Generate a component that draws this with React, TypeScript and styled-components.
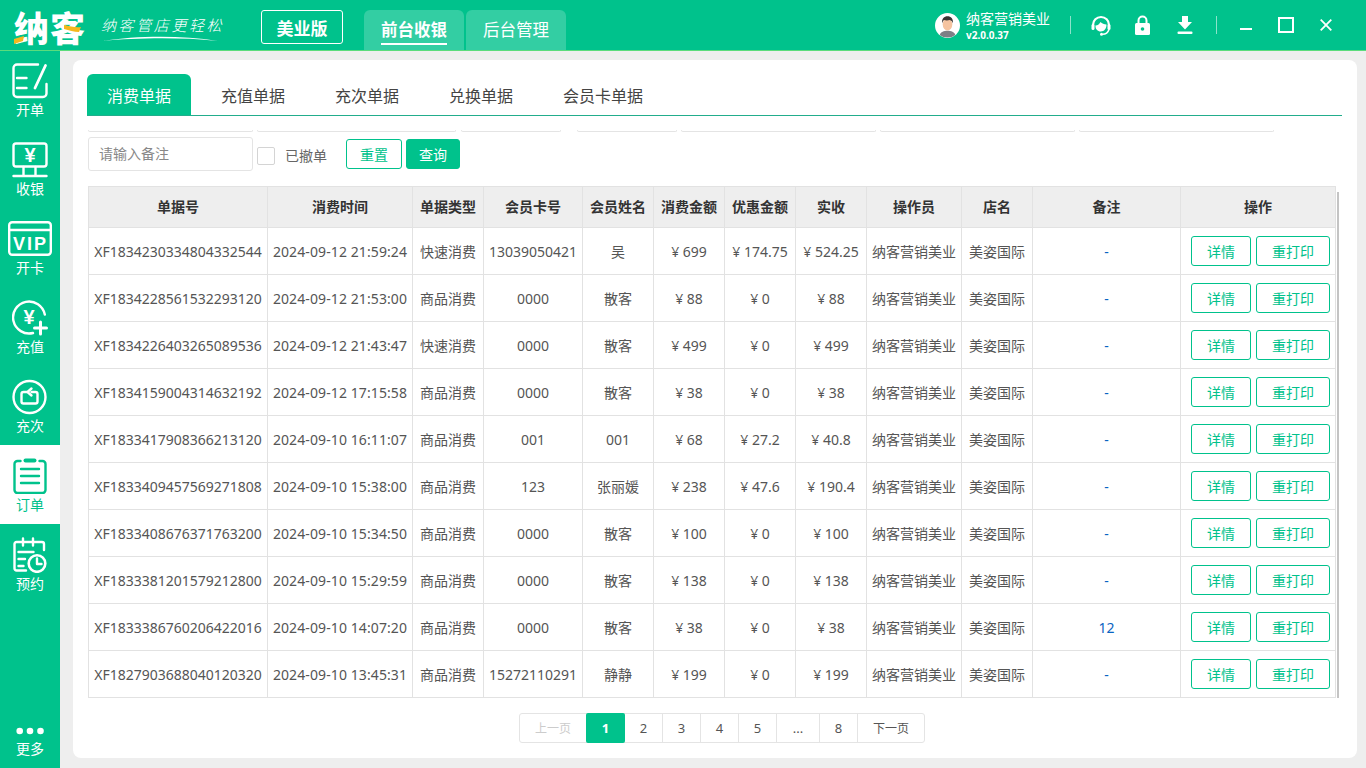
import React from "react"
import styled, { createGlobalStyle } from "styled-components"

const GREEN = "#00c28c"

const Global = createGlobalStyle`
  html, body { margin: 0; padding: 0; height: 100%; }
  body { font-family: "Noto Sans", "Noto Sans CJK SC", sans-serif; background: #eeeeee; overflow: hidden; }
  * { box-sizing: border-box; }
`

const Page = styled.div`
  width: 1366px;
  height: 768px;
  display: flex;
  flex-direction: column;
  background: #eeeeee;
`

// Header
const Header = styled.header`
  height: 50px;
  flex: none;
  background: ${GREEN};
  box-shadow: 0 1px 0 #5cdc7c;
  position: relative;
  z-index: 2;
  display: flex;
  align-items: flex-start;
  color: #fff;
`

const Logo = styled.div`
  width: 261px;
  height: 50px;
  flex: none;
  padding: 8px 0 0 14px;
  display: flex;
`

const LogoMark = styled.div`
  position: relative;
  width: 76px;
  font-size: 35px;
  line-height: 38px;
  font-weight: 900;
  letter-spacing: 1px;
  font-family: "Noto Sans CJK SC", sans-serif;
  white-space: nowrap;
`

const LogoAccent = styled.svg`
  position: absolute;
  left: 0;
  top: 0;
`

const Slogan = styled.div`
  position: relative;
  margin-left: 11px;
  padding-top: 8px;
  font-size: 15px;
  line-height: 18px;
  letter-spacing: 2.6px;
  font-family: "Noto Sans CJK SC", sans-serif;
  font-weight: 300;
  font-style: italic;
  white-space: nowrap;
`

const Swoosh = styled.svg`
  position: absolute;
  left: 2px;
  top: 27px;
`

const Edition = styled.div`
  width: 82px;
  height: 34px;
  margin-top: 10px;
  flex: none;
  border: 1px solid #fff;
  border-radius: 3px;
  display: flex;
  align-items: center;
  justify-content: center;
  font-size: 17px;
  font-weight: 700;
`

const NavTabs = styled.nav`
  display: flex;
  gap: 2px;
  margin: 10px 0 0 21px;
`

const NavTab = styled.div<{ $active?: boolean }>`
  width: 100px;
  height: 40px;
  background: rgba(255, 255, 255, 0.2);
  border-radius: 6px 6px 0 0;
  display: flex;
  align-items: flex-start;
  justify-content: center;
  font-size: 16.5px;
  font-weight: ${(p) => (p.$active ? 700 : 400)};
  span {
    display: block;
    height: 35px;
    line-height: 40px;
    border-bottom: ${(p) => (p.$active ? "2px solid #fff" : "none")};
  }
`

const HeaderRight = styled.div`
  margin-left: auto;
  height: 50px;
  display: flex;
  align-items: center;
  padding-right: 34px;
`

const User = styled.div`
  display: flex;
  align-items: center;
  gap: 6px;
`

const UserText = styled.div`
  display: flex;
  flex-direction: column;
  width: 104px;
  padding-top: 1px;
`

const UserName = styled.div`
  font-size: 14px;
  line-height: 18px;
  white-space: nowrap;
`

const Version = styled.div`
  font-size: 10px;
  line-height: 14px;
  font-weight: 700;
`

const Divider = styled.div`
  width: 1px;
  height: 18px;
  background: rgba(255, 255, 255, 0.55);
`

const IconGroup = styled.div<{ $gap: number; $left: number; $right: number }>`
  display: flex;
  align-items: center;
  gap: ${(p) => p.$gap}px;
  margin: 0 ${(p) => p.$right}px 0 ${(p) => p.$left}px;
`

// Body
const Body = styled.div`
  flex: 1;
  display: flex;
  min-height: 0;
`

const Sidebar = styled.aside`
  width: 60px;
  flex: none;
  background: ${GREEN};
  display: flex;
  flex-direction: column;
`

const SideItem = styled.div<{ $active?: boolean }>`
  height: 79px;
  flex: none;
  background: ${(p) => (p.$active ? "#fff" : "transparent")};
  color: ${(p) => (p.$active ? GREEN : "#fff")};
  display: flex;
  flex-direction: column;
  align-items: center;
  justify-content: flex-start;
  font-size: 14px;
  line-height: 16px;
  padding-top: 13px;
  svg {
    display: block;
    height: 36px;
    margin-bottom: 3px;
  }
`

const MoreItem = styled(SideItem)`
  margin-top: auto;
  height: 47px;
  padding-top: 0;
  svg {
    height: 20px;
    margin-bottom: 0;
  }
`

const Main = styled.main`
  flex: 1;
  padding: 10px 9px 10px 13px;
  min-width: 0;
`

const Card = styled.div`
  height: 100%;
  background: #fff;
  border-radius: 8px;
  padding: 14px 15px 0 14px;
`

const Tabs = styled.div`
  height: 42px;
  display: flex;
  border-bottom: 1px solid #22ad8c;
`

const Tab = styled.div<{ $active?: boolean; $w: number }>`
  width: ${(p) => p.$w}px;
  height: 41px;
  display: flex;
  align-items: center;
  justify-content: center;
  font-size: 16px;
  color: ${(p) => (p.$active ? "#fff" : "#444")};
  background: ${(p) => (p.$active ? GREEN : "transparent")};
  border-radius: ${(p) => (p.$active ? "6px 6px 0 0" : "0")};
`

const Stubs = styled.div`
  display: flex;
  height: 2px;
  margin: 14px 0 0 1px;
`

const Stub = styled.div<{ $w: number; $ml: number }>`
  width: ${(p) => p.$w}px;
  margin-left: ${(p) => p.$ml}px;
  height: 2px;
  border: 1px solid #e4e4e4;
  border-top: none;
  border-radius: 0 0 3px 3px;
`

const Filters = styled.div`
  display: flex;
  align-items: flex-start;
  margin: 5px 0 0 1px;
`

const SearchInput = styled.input`
  width: 165px;
  height: 34px;
  border: 1px solid #e4e4e4;
  border-radius: 3px;
  padding: 0 10px 2px;
  font: inherit;
  font-size: 14px;
  outline: none;
  &::placeholder {
    color: #888;
    opacity: 1;
  }
`

const CheckLabel = styled.label`
  display: flex;
  align-items: center;
  height: 18px;
  margin: 10px 19px 0 4px;
  font-size: 14px;
  color: #666;
  gap: 10px;
  line-height: 20px;
`

const CheckBox = styled.span`
  width: 18px;
  height: 18px;
  border: 1px solid #d4d4d4;
  border-radius: 2px;
  background: #fff;
`

const FilterButton = styled.button<{ $primary?: boolean }>`
  height: 30px;
  margin: 2px 4px 0 0;
  padding: 0;
  width: ${(p) => (p.$primary ? 54 : 56)}px;
  border: 1px solid ${GREEN};
  border-radius: 3px;
  background: ${(p) => (p.$primary ? GREEN : "#fff")};
  color: ${(p) => (p.$primary ? "#fff" : GREEN)};
  font: inherit;
  font-size: 14px;
`

const TableWrap = styled.div`
  position: relative;
  margin: 15px 0 0 1px;
  width: 1251px;
`

const ScrollLine = styled.div`
  position: absolute;
  left: 1249px;
  top: 6px;
  bottom: 0;
  width: 2px;
  background: #c4c4c4;
`

const Table = styled.table`
  table-layout: fixed;
  border-collapse: collapse;
  width: 1248px;
`

const Th = styled.th`
  height: 41px;
  padding: 0 0 2px;
  background: #eeeeee;
  border: 1px solid #e2e2e2;
  font-size: 14px;
  font-weight: 700;
  color: #333;
  text-align: center;
  white-space: nowrap;
`

const Td = styled.td`
  height: 47px;
  padding: 0;
  border: 1px solid #e2e2e2;
  font-size: 14px;
  color: #555;
  text-align: center;
  white-space: nowrap;
  overflow: hidden;
`

const DateCell = styled(Td)`
  letter-spacing: 0.1px;
`

const NoteLink = styled.span`
  color: #0a64c2;
`

const Actions = styled.div`
  display: flex;
  justify-content: flex-end;
  gap: 5px;
  padding-right: 5px;
`

const RowButton = styled.button<{ $w: number }>`
  width: ${(p) => p.$w}px;
  height: 30px;
  padding: 0;
  border: 1px solid ${GREEN};
  border-radius: 3px;
  background: #fff;
  color: ${GREEN};
  font: inherit;
  font-size: 14px;
`

const Pager = styled.div`
  display: flex;
  width: 406px;
  height: 30px;
  margin: 15px 0 0 432px;
  border: 1px solid #e4e4e4;
  border-radius: 3px;
`

const PageItem = styled.div<{ $w: number; $active?: boolean; $off?: boolean }>`
  width: ${(p) => p.$w}px;
  flex: none;
  display: flex;
  align-items: center;
  justify-content: center;
  margin: ${(p) => (p.$active ? "-1px 0" : "0")};
  font-size: ${(p) => (p.$w > 50 ? 12 : 13)}px;
  font-weight: ${(p) => (p.$active ? 700 : 400)};
  color: ${(p) => (p.$active ? "#fff" : p.$off ? "#ccc" : "#555")};
  background: ${(p) => (p.$active ? GREEN : "transparent")};
  border-radius: ${(p) => (p.$active ? "2px" : "0")};
  border-right: ${(p) => (p.$active || p.$off ? "none" : "1px solid #e4e4e4")};
  &:last-child {
    border-right: none;
  }
`

// Icons
const stroke = { fill: "none", stroke: "currentColor", strokeWidth: 2.4, strokeLinecap: "round", strokeLinejoin: "round" } as const
const iconText = { fill: "currentColor", fontFamily: "'Liberation Sans', sans-serif", fontWeight: 700, textAnchor: "middle" } as const

const IconOpen = () => (
  <svg width="36" viewBox="0 0 36 36">
    <g {...stroke}>
      <path d="M26 1.500H5A3.500 3.500 0 0 0 1.500 5v25.500A3.500 3.500 0 0 0 5 34h26a3.500 3.500 0 0 0 3.500-3.500V21" />
      <path d="M5 15h9.500M5 25h9.500" />
      <path d="M33.500 2.500L23 25" strokeWidth="2.800" />
    </g>
  </svg>
)

const IconCash = () => (
  <svg width="36" viewBox="0 0 36 36">
    <g {...stroke}>
      <rect x="1.500" y="1.500" width="33" height="23" rx="2.500" />
      <path d="M11.500 25v9M23.500 25v9M1.500 34h33" />
    </g>
    <text x="18" y="20" fontSize="20" {...iconText}>¥</text>
  </svg>
)

const IconVip = () => (
  <svg width="44" viewBox="0 0 44 36">
    <g {...stroke}>
      <rect x="1.200" y="1.200" width="41.600" height="32.600" rx="3" />
      <path d="M1.500 9h41" />
    </g>
    <text x="22.500" y="28.500" fontSize="18" letterSpacing="2" {...iconText}>VIP</text>
  </svg>
)

const IconRecharge = () => (
  <svg width="36" viewBox="0 0 36 36">
    <g {...stroke}>
      <path d="M32.800 14.500A16 16 0 1 0 21 33" />
      <path d="M28.500 22v12M22.500 28h12" strokeWidth="3" />
    </g>
    <text x="17" y="24" fontSize="20" {...iconText}>¥</text>
  </svg>
)

const IconTimes = () => (
  <svg width="36" viewBox="0 0 36 36">
    <g {...stroke}>
      <circle cx="17.500" cy="18" r="16" />
      <path d="M15 13h-3.500a2 2 0 0 0-2 2v7.500a2 2 0 0 0 2 2h12a2 2 0 0 0 2-2V15a2 2 0 0 0-2-2h-4" />
      <path d="M19.500 9.500L15.500 13l4 3.500" />
    </g>
  </svg>
)

const IconOrder = () => (
  <svg width="34" viewBox="0 0 34 36">
    <g {...stroke}>
      <path d="M7.500 3H4.500a3 3 0 0 0-3 3v26a3 3 0 0 0 3 3h25a3 3 0 0 0 3-3V6a3 3 0 0 0-3-3h-3" />
      <path d="M12.500 2.500h9" strokeWidth="4" />
      <path d="M8 11h18M8 18h18M8 25h18" />
    </g>
  </svg>
)

const IconBook = () => (
  <svg width="34" viewBox="0 0 34 36">
    <g {...stroke}>
      <path d="M13 33.500H3.500a2 2 0 0 1-2-2V7a2 2 0 0 1 2-2H29a2 2 0 0 1 2 2v6" />
      <path d="M10 1.500v7M20 1.500v7" />
      <path d="M5.500 15h15M5.500 22h6.500M5.500 29h5" />
      <circle cx="24" cy="26.500" r="8.300" strokeWidth="2.600" />
      <path d="M24 21.500v5.500h4.500" />
    </g>
  </svg>
)

const IconMore = () => (
  <svg width="30" viewBox="0 0 30 20">
    <g fill="currentColor">
      <circle cx="4.700" cy="10" r="3.300" />
      <circle cx="15" cy="10" r="3.300" />
      <circle cx="25.500" cy="10" r="3.300" />
    </g>
  </svg>
)

const Avatar = () => (
  <svg width="25" height="25" viewBox="0 0 24 24">
    <circle cx="12" cy="12" r="12" fill="#fff" />
    <path d="M4.500 21c1-3 4-4 7.500-4s6.500 1 7.500 4a12 12 0 0 1-15 0z" fill="#7d7f86" />
    <ellipse cx="12" cy="11" rx="4.600" ry="5.800" fill="#f5c3a0" />
    <path d="M6.800 10c-.5-5 2-7 5.200-7s5.700 2 5.200 7c-.6-2-1.600-3-3-3.300-2 .6-4 .5-5.400 0-1 .6-1.600 1.600-2 3.300z" fill="#3a3433" />
  </svg>
)

const IconHeadset = () => (
  <svg width="20" height="22" viewBox="0 0 20 22">
    <path d="M2 11a8 8 0 0 1 16 0" fill="none" stroke="#fff" strokeWidth="2.200" />
    <rect x="0.500" y="10" width="3" height="6" rx="1.500" fill="#fff" />
    <rect x="16.500" y="10" width="3" height="6" rx="1.500" fill="#fff" />
    <path d="M4.500 11.500c2.500-.2 4-1.600 5-3.500 1.500 1.500 3.500 2.300 6 2.500.2 4.200-2.500 7-5.700 7s-5.500-2.500-5.300-6z" fill="#fff" />
    <path d="M18 15.500c-1 3-3.500 4.700-6.500 4.800" fill="none" stroke="#fff" strokeWidth="1.500" />
    <circle cx="10.500" cy="20.300" r="1.500" fill="#fff" />
  </svg>
)

const IconLock = () => (
  <svg width="18" height="20" viewBox="0 0 18 20">
    <path d="M3.500 9V5.500a4 4 0 0 1 8 0V9" fill="none" stroke="#fff" strokeWidth="2" />
    <rect x="0" y="8" width="15" height="12" rx="1.500" fill="#fff" />
    <circle cx="7.500" cy="14" r="1.800" fill={GREEN} />
  </svg>
)

const IconDownload = () => (
  <svg width="16" height="18" viewBox="0 0 16 18">
    <path d="M5 0h6v6h4l-7 7.500L1 6h4z" fill="#fff" />
    <rect x="0.500" y="15.500" width="15" height="2.500" rx="1" fill="#fff" />
  </svg>
)

const IconMin = () => (
  <svg width="12" height="16" viewBox="0 0 12 16">
    <path d="M0 12h12" stroke="#fff" strokeWidth="2" />
  </svg>
)

const IconMax = () => (
  <svg width="16" height="16" viewBox="0 0 16 16">
    <rect x="1" y="1" width="14" height="14" fill="none" stroke="#fff" strokeWidth="2" />
  </svg>
)

const IconClose = () => (
  <svg width="12" height="12" viewBox="0 0 12 12">
    <path d="M.7.700l10.600 10.600M11.300.700L.7 11.300" stroke="#fff" strokeWidth="1.800" />
  </svg>
)

// Data
const colWidths = [179, 145, 71, 99, 71, 71, 71, 71, 95, 71, 148, 155]
const heads = ["单据号", "消费时间", "单据类型", "会员卡号", "会员姓名", "消费金额", "优惠金额", "实收", "操作员", "店名", "备注", "操作"]

const rows = [
  ["XF1834230334804332544", "2024-09-12 21:59:24", "快速消费", "13039050421", "吴", "¥ 699", "¥ 174.75", "¥ 524.25", "-"],
  ["XF1834228561532293120", "2024-09-12 21:53:00", "商品消费", "0000", "散客", "¥ 88", "¥ 0", "¥ 88", "-"],
  ["XF1834226403265089536", "2024-09-12 21:43:47", "快速消费", "0000", "散客", "¥ 499", "¥ 0", "¥ 499", "-"],
  ["XF1834159004314632192", "2024-09-12 17:15:58", "商品消费", "0000", "散客", "¥ 38", "¥ 0", "¥ 38", "-"],
  ["XF1833417908366213120", "2024-09-10 16:11:07", "商品消费", "001", "001", "¥ 68", "¥ 27.2", "¥ 40.8", "-"],
  ["XF1833409457569271808", "2024-09-10 15:38:00", "商品消费", "123", "张丽媛", "¥ 238", "¥ 47.6", "¥ 190.4", "-"],
  ["XF1833408676371763200", "2024-09-10 15:34:50", "商品消费", "0000", "散客", "¥ 100", "¥ 0", "¥ 100", "-"],
  ["XF1833381201579212800", "2024-09-10 15:29:59", "商品消费", "0000", "散客", "¥ 138", "¥ 0", "¥ 138", "-"],
  ["XF1833386760206422016", "2024-09-10 14:07:20", "商品消费", "0000", "散客", "¥ 38", "¥ 0", "¥ 38", "12"],
  ["XF1827903688040120320", "2024-09-10 13:45:31", "商品消费", "15272110291", "静静", "¥ 199", "¥ 0", "¥ 199", "-"],
]

const sideItems = [
  { label: "开单", icon: <IconOpen /> },
  { label: "收银", icon: <IconCash /> },
  { label: "开卡", icon: <IconVip /> },
  { label: "充值", icon: <IconRecharge /> },
  { label: "充次", icon: <IconTimes /> },
  { label: "订单", icon: <IconOrder />, active: true },
  { label: "预约", icon: <IconBook /> },
]

const stubs = [
  [165, 0],
  [199, 4],
  [100, 5],
  [100, 16],
  [195, 4],
  [195, 4],
  [195, 4],
]

const pages = [
  { t: "上一页", w: 66, off: true },
  { t: "1", w: 39, active: true },
  { t: "2", w: 38 },
  { t: "3", w: 38 },
  { t: "4", w: 38 },
  { t: "5", w: 38 },
  { t: "...", w: 43 },
  { t: "8", w: 38 },
  { t: "下一页", w: 66 },
]

export default function App() {
  return (
    <Page>
      <Global />
      <Header>
        <Logo>
          <LogoMark>
            纳客
            <LogoAccent width="76" height="38" viewBox="0 0 76 38">
              <path d="M0 31l10-3-1 5-9 3z" fill="#f5b81c" />
              <path d="M50 17c6 1 12 3 17 2l-2 5c-5 0-10-2-15-3z" fill="#f5b81c" />
            </LogoAccent>
          </LogoMark>
          <Slogan>
            纳客管店更轻松
            <Swoosh width="117" height="8" viewBox="0 0 117 8">
              <path d="M0 6C32 1 76 0 115 6 76 2 32 3 0 6z" fill="#fff" />
            </Swoosh>
          </Slogan>
        </Logo>
        <Edition>美业版</Edition>
        <NavTabs>
          <NavTab $active>
            <span>前台收银</span>
          </NavTab>
          <NavTab>
            <span>后台管理</span>
          </NavTab>
        </NavTabs>
        <HeaderRight>
          <User>
            <Avatar />
            <UserText>
              <UserName>纳客营销美业</UserName>
              <Version>v2.0.0.37</Version>
            </UserText>
          </User>
          <Divider />
          <IconGroup $gap={24} $left={20} $right={23}>
            <IconHeadset />
            <IconLock />
            <IconDownload />
          </IconGroup>
          <Divider />
          <IconGroup $gap={26} $left={23} $right={0}>
            <IconMin />
            <IconMax />
            <IconClose />
          </IconGroup>
        </HeaderRight>
      </Header>
      <Body>
        <Sidebar>
          {sideItems.map((s) => (
            <SideItem key={s.label} $active={s.active}>
              {s.icon}
              {s.label}
            </SideItem>
          ))}
          <MoreItem>
            <IconMore />
            更多
          </MoreItem>
        </Sidebar>
        <Main>
          <Card>
            <Tabs>
              <Tab $active $w={104}>消费单据</Tab>
              <Tab $w={124}>充值单据</Tab>
              <Tab $w={104}>充次单据</Tab>
              <Tab $w={124}>兑换单据</Tab>
              <Tab $w={120}>会员卡单据</Tab>
            </Tabs>
            <Stubs>
              {stubs.map(([w, ml], i) => (
                <Stub key={i} $w={w} $ml={ml} />
              ))}
            </Stubs>
            <Filters>
              <SearchInput placeholder="请输入备注" readOnly />
              <CheckLabel>
                <CheckBox />
                已撤单
              </CheckLabel>
              <FilterButton>重置</FilterButton>
              <FilterButton $primary>查询</FilterButton>
            </Filters>
            <TableWrap>
              <ScrollLine />
              <Table>
                <colgroup>
                  {colWidths.map((w, i) => (
                    <col key={i} width={w} />
                  ))}
                </colgroup>
                <thead>
                  <tr>
                    {heads.map((h) => (
                      <Th key={h}>{h}</Th>
                    ))}
                  </tr>
                </thead>
                <tbody>
                  {rows.map((r) => (
                    <tr key={r[0]}>
                      <Td>{r[0]}</Td>
                      <DateCell>{r[1]}</DateCell>
                      <Td>{r[2]}</Td>
                      <Td>{r[3]}</Td>
                      <Td>{r[4]}</Td>
                      <Td>{r[5]}</Td>
                      <Td>{r[6]}</Td>
                      <Td>{r[7]}</Td>
                      <Td>纳客营销美业</Td>
                      <Td>美姿国际</Td>
                      <Td><NoteLink>{r[8]}</NoteLink></Td>
                      <Td>
                        <Actions>
                          <RowButton $w={60}>详情</RowButton>
                          <RowButton $w={74}>重打印</RowButton>
                        </Actions>
                      </Td>
                    </tr>
                  ))}
                </tbody>
              </Table>
            </TableWrap>
            <Pager>
              {pages.map((p) => (
                <PageItem key={p.t} $w={p.w} $active={p.active} $off={p.off}>
                  {p.t}
                </PageItem>
              ))}
            </Pager>
          </Card>
        </Main>
      </Body>
    </Page>
  )
}
